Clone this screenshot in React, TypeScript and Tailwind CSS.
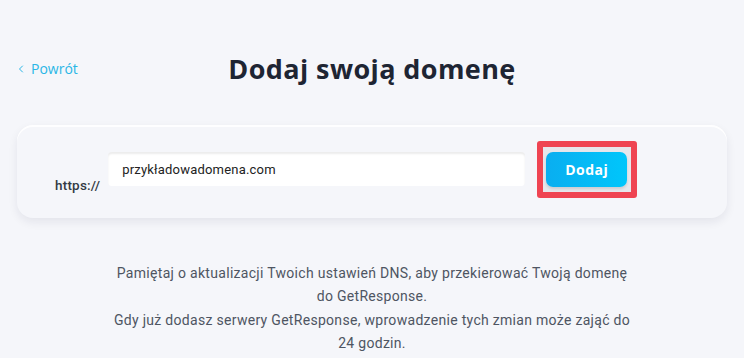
import { ChevronLeft } from "lucide-react";

export default function App() {
  return (
    <div className="w-[744px] h-[358px] bg-[#f5f6fa] overflow-hidden font-['Roboto',sans-serif]">
      {/* Header */}
      <div className="relative h-[125px] pt-[49px]">
        <a className="absolute left-[15px] top-[58px] flex items-center gap-[4px] text-[14px] text-[#2ab6e6] font-['Open_Sans',sans-serif]">
          <ChevronLeft className="w-[12px] h-[12px]" strokeWidth={2} />
          Powrót
        </a>
        <h1 className="text-center text-[27px] leading-[40px] font-bold tracking-[0.4px] text-[#1e2533] font-['Open_Sans',sans-serif]">
          Dodaj swoją domenę
        </h1>
      </div>

      {/* Domain card */}
      <div className="mx-[17px] h-[93px] rounded-[16px] bg-[#f5f6fa] shadow-[0_4px_10px_rgba(20,30,60,0.08),inset_0_2px_0_rgba(255,255,255,0.9)] flex items-start pl-[38px]">
        <span className="mt-[50px] text-[13.5px] tracking-[0.2px] font-medium text-[#333a44]">https://</span>
        <input
          readOnly
          value="przykładowadomena.com"
          className="ml-[8px] mt-[27px] w-[417px] h-[34px] rounded-[4px] bg-white pl-[14px] text-[13px] tracking-[0.2px] text-[#222] outline-none shadow-[inset_0_2px_2px_rgba(0,0,0,0.08)]"
        />
        <div className="ml-[12px] mt-[16px] rounded-[3px] border-[6px] border-[#ef4452] bg-[#e6e7ec] pl-[3px] pr-[4px] pt-[5px] pb-[5px]">
          <button className="w-[81px] h-[35px] rounded-[7px] bg-gradient-to-r from-[#0aaef0] to-[#00c6fb] text-white text-[14px] font-bold tracking-[0.5px] font-['Open_Sans',sans-serif] shadow-[0_2px_3px_rgba(0,0,0,0.12)]">
            Dodaj
          </button>
        </div>
      </div>

      {/* Info */}
      <p className="mx-auto mt-[44px] w-[526px] text-center text-[14px] tracking-[0.3px] leading-[23.3px] text-[#4e5562]">
        Pamiętaj o aktualizacji Twoich ustawień DNS, aby przekierować Twoją domenę do GetResponse.
        <br />
        Gdy już dodasz serwery GetResponse, wprowadzenie tych zmian może zająć do 24 godzin.
      </p>
    </div>
  );
}
